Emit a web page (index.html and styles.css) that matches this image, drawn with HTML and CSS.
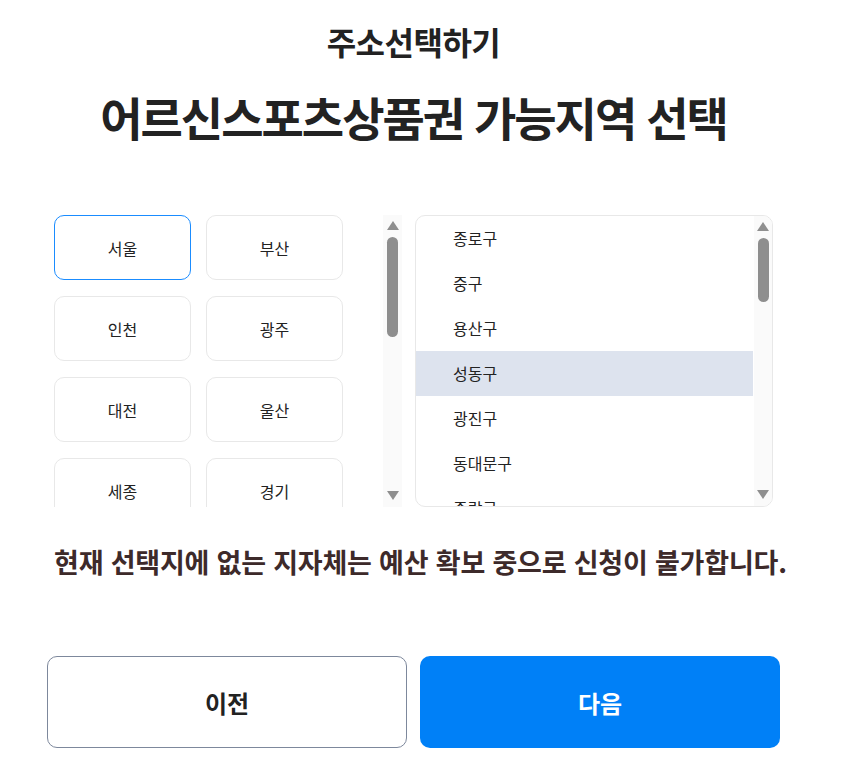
FILE: index.html
```html
<!DOCTYPE html>
<html lang="ko">
<head>
    <meta charset="UTF-8">
    <meta name="viewport" content="width=device-width, initial-scale=1.0">
    <title>주소선택하기</title>
    <link rel="stylesheet" href="styles.css">
</head>
<body>
    <div class="page">
        <h2 class="title">주소선택하기</h2>
        <h1 class="heading">어르신스포츠상품권 가능지역 선택</h1>

        <div class="selector">
            <div class="scroll-box region-box">
                <div class="region-scroll">
                    <div class="region-grid">
                        <button class="region-btn region-active">서울</button>
                        <button class="region-btn">부산</button>
                        <button class="region-btn">인천</button>
                        <button class="region-btn">광주</button>
                        <button class="region-btn">대전</button>
                        <button class="region-btn">울산</button>
                        <button class="region-btn">세종</button>
                        <button class="region-btn">경기</button>
                        <button class="region-btn">강원</button>
                        <button class="region-btn">충북</button>
                        <button class="region-btn">충남</button>
                        <button class="region-btn">전북</button>
                        <button class="region-btn">전남</button>
                        <button class="region-btn">경북</button>
                        <button class="region-btn">경남</button>
                        <button class="region-btn">제주</button>
                    </div>
                </div>
                <div class="scrollbar">
                    <svg class="scroll-arrow" width="12" height="9" viewBox="0 0 12 9"><path d="M6 0 L12 9 L0 9 Z" fill="#8f8f8f"/></svg>
                    <div class="scroll-thumb region-thumb"></div>
                    <svg class="scroll-arrow arrow-down" width="12" height="9" viewBox="0 0 12 9"><path d="M0 0 L12 0 L6 9 Z" fill="#8f8f8f"/></svg>
                </div>
            </div>

            <div class="scroll-box district-box">
                <ul class="district-list">
                    <li class="district-item">종로구</li>
                    <li class="district-item">중구</li>
                    <li class="district-item">용산구</li>
                    <li class="district-item district-active">성동구</li>
                    <li class="district-item">광진구</li>
                    <li class="district-item">동대문구</li>
                    <li class="district-item">중랑구</li>
                    <li class="district-item">성북구</li>
                    <li class="district-item">강북구</li>
                    <li class="district-item">도봉구</li>
                    <li class="district-item">노원구</li>
                    <li class="district-item">은평구</li>
                    <li class="district-item">서대문구</li>
                    <li class="district-item">마포구</li>
                    <li class="district-item">양천구</li>
                    <li class="district-item">강서구</li>
                    <li class="district-item">구로구</li>
                    <li class="district-item">금천구</li>
                    <li class="district-item">영등포구</li>
                    <li class="district-item">동작구</li>
                    <li class="district-item">관악구</li>
                    <li class="district-item">서초구</li>
                    <li class="district-item">강남구</li>
                    <li class="district-item">송파구</li>
                    <li class="district-item">강동구</li>
                </ul>
                <div class="scrollbar district-scrollbar">
                    <svg class="scroll-arrow" width="12" height="9" viewBox="0 0 12 9"><path d="M6 0 L12 9 L0 9 Z" fill="#8f8f8f"/></svg>
                    <div class="scroll-thumb district-thumb"></div>
                    <svg class="scroll-arrow arrow-down" width="12" height="9" viewBox="0 0 12 9"><path d="M0 0 L12 0 L6 9 Z" fill="#8f8f8f"/></svg>
                </div>
            </div>
        </div>

        <p class="notice">현재 선택지에 없는 지자체는 예산 확보 중으로 신청이 불가합니다.</p>

        <div class="actions">
            <button class="action-btn prev-btn">이전</button>
            <button class="action-btn next-btn">다음</button>
        </div>
    </div>
</body>
</html>
```

FILE: styles.css
```css
* {
    margin: 0;
    padding: 0;
    box-sizing: border-box;
}

body {
    background-color: #fff;
    font-family: 'Noto Sans CJK KR', 'Noto Sans', sans-serif;
    color: #222;
}

.page {
    width: 733px;
    margin-left: 47px;
    padding-top: 20px;
}

.title {
    text-align: center;
    font-size: 32px;
    line-height: 42px;
    font-weight: 700;
    letter-spacing: -0.5px;
    color: #222;
}

.heading {
    margin-top: 26px;
    text-align: center;
    font-size: 46px;
    line-height: 57px;
    font-weight: 700;
    letter-spacing: -2px;
    color: #222;
}

.selector {
    display: flex;
    gap: 13px;
    margin-top: 70px;
    padding: 0 7px;
}

.scroll-box {
    position: relative;
    height: 292px;
}

/* drawn scrollbar, sits over the right edge of the box */
.scrollbar {
    position: absolute;
    top: 0;
    right: 0;
    bottom: 0;
    width: 19px;
    display: flex;
    flex-direction: column;
    align-items: center;
    padding: 6px 0 7px;
    background-color: #fafafa;
}

.district-scrollbar {
    top: 1px;
    right: 1px;
    bottom: 1px;
    width: 18px;
    border-radius: 0 9px 9px 0;
}

.scroll-arrow {
    display: block;
    flex-shrink: 0;
}

.arrow-down {
    margin-top: auto;
}

.scroll-thumb {
    width: 11px;
    margin-top: 7px;
    background-color: #8e8e8e;
    border-radius: 6px;
}

.region-thumb {
    height: 100px;
}

.district-thumb {
    height: 64px;
}

.region-box {
    width: 348px;
}

.region-scroll {
    height: 100%;
    overflow: hidden;
}

.region-grid {
    display: grid;
    grid-template-columns: 137px 137px;
    column-gap: 15px;
    row-gap: 16px;
}

.region-btn {
    height: 65px;
    background-color: #fff;
    border: 1px solid #e8e8e8;
    border-radius: 10px;
    font-family: inherit;
    font-size: 16px;
    color: #222;
    cursor: pointer;
}

.region-active {
    border-color: #1a8cff;
}

.district-box {
    width: 358px;
}

.district-list {
    height: 100%;
    list-style: none;
    border: 1px solid #e8e8e8;
    border-radius: 10px;
    padding-right: 19px;
    overflow: hidden;
}

.district-item {
    height: 45px;
    line-height: 45px;
    padding-left: 37px;
    font-size: 16px;
    color: #222;
    cursor: pointer;
}

.district-active {
    background-color: #dde3ee;
}

.notice {
    margin-top: 37px;
    margin-left: 7px;
    white-space: nowrap;
    text-align: center;
    font-size: 27px;
    line-height: 36px;
    font-weight: 700;
    letter-spacing: -0.2px;
    color: #3d2a2a;
}

.actions {
    display: flex;
    gap: 13px;
    margin-top: 76px;
}

.action-btn {
    width: 360px;
    height: 92px;
    border-radius: 10px;
    font-family: inherit;
    font-size: 24px;
    font-weight: 700;
    cursor: pointer;
}

.prev-btn {
    background-color: #fff;
    border: 1px solid #7d889c;
    color: #222;
}

.next-btn {
    background-color: #0080f7;
    border: none;
    color: #fff;
}
```
